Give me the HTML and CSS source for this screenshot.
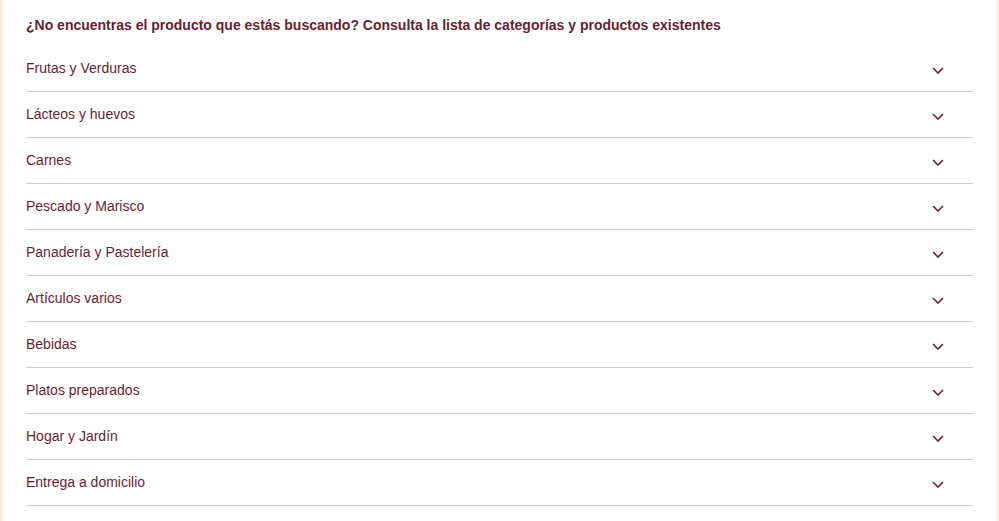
FILE: index.html
```html
<!DOCTYPE html>
<html lang="es">
<head>
<meta charset="utf-8">
<link rel="stylesheet" href="styles.css">
</head>
<body>
<div class="panel">
  <h2 class="title">¿No encuentras el producto que estás buscando? Consulta la lista de categorías y productos existentes</h2>
  <ul class="list">
    <li class="row"><span>Frutas y Verduras</span><svg class="chev" viewBox="0 0 12 7"><polyline points="1,1 6,6 11,1"/></svg></li>
    <li class="row"><span>Lácteos y huevos</span><svg class="chev" viewBox="0 0 12 7"><polyline points="1,1 6,6 11,1"/></svg></li>
    <li class="row"><span>Carnes</span><svg class="chev" viewBox="0 0 12 7"><polyline points="1,1 6,6 11,1"/></svg></li>
    <li class="row"><span>Pescado y Marisco</span><svg class="chev" viewBox="0 0 12 7"><polyline points="1,1 6,6 11,1"/></svg></li>
    <li class="row"><span>Panadería y Pastelería</span><svg class="chev" viewBox="0 0 12 7"><polyline points="1,1 6,6 11,1"/></svg></li>
    <li class="row"><span>Artículos varios</span><svg class="chev" viewBox="0 0 12 7"><polyline points="1,1 6,6 11,1"/></svg></li>
    <li class="row"><span>Bebidas</span><svg class="chev" viewBox="0 0 12 7"><polyline points="1,1 6,6 11,1"/></svg></li>
    <li class="row"><span>Platos preparados</span><svg class="chev" viewBox="0 0 12 7"><polyline points="1,1 6,6 11,1"/></svg></li>
    <li class="row"><span>Hogar y Jardín</span><svg class="chev" viewBox="0 0 12 7"><polyline points="1,1 6,6 11,1"/></svg></li>
    <li class="row"><span>Entrega a domicilio</span><svg class="chev" viewBox="0 0 12 7"><polyline points="1,1 6,6 11,1"/></svg></li>
  </ul>
</div>
</body>
</html>
```

FILE: styles.css
```css
html, body {
  margin: 0;
  padding: 0;
  background: #ffffff;
}
body {
  font-family: "Liberation Sans", Arial, Helvetica, sans-serif;
  color: #6b1d30;
}
.panel {
  width: 999px;
  height: 521px;
  box-sizing: border-box;
  border-left: 2px solid #fde6cc;
  border-right: 2px solid #fde6cc;
  padding: 15px 24px 0 24px;
  overflow: hidden;
}
.title {
  margin: 0 0 11px 0;
  font-size: 14px;
  line-height: 20px;
  font-weight: bold;
  color: #6b1d30;
}
.list {
  list-style: none;
  margin: 0;
  padding: 0;
}
.row {
  height: 46px;
  box-sizing: border-box;
  padding-bottom: 2px;
  display: flex;
  align-items: center;
  justify-content: space-between;
  border-bottom: 1px solid #cccccc;
  font-size: 14px;
}
.chev {
  width: 12px;
  height: 7px;
  margin-right: 29px;
  margin-top: 5px;
  fill: none;
  stroke: #6b1d30;
  stroke-width: 1.6;
}
```
